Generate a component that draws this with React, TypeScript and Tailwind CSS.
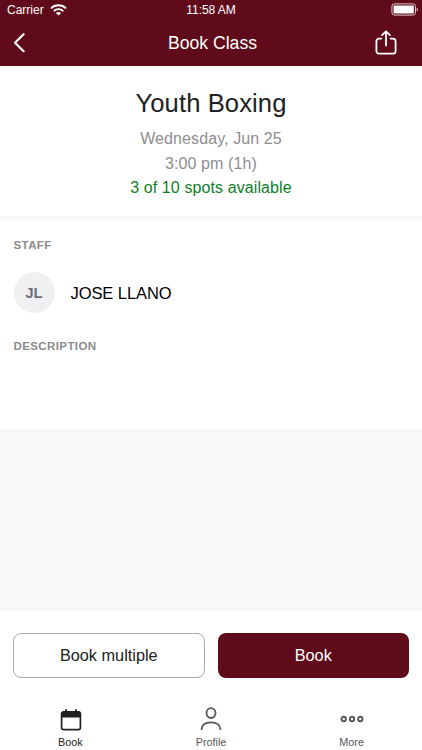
import React from 'react';

type IconProps = { className?: string };

const WifiIcon: React.FC<IconProps> = ({ className }) => (
  <svg viewBox="0 0 17 12" fill="none" stroke="currentColor" strokeWidth="1.8" className={className}>
    <path d="M1 4.3a10.8 10.8 0 0 1 15 0" />
    <path d="M3.7 7.1a7 7 0 0 1 9.6 0" />
    <path d="M8.5 11.6 5.9 9.1a3.8 3.8 0 0 1 5.2 0z" fill="currentColor" stroke="none" />
  </svg>
);

const BatteryIcon: React.FC<IconProps> = ({ className }) => (
  <svg viewBox="0 0 28 13" fill="none" className={className}>
    <rect x="0.9" y="0.9" width="23.6" height="11.2" rx="2.8" stroke="currentColor" strokeOpacity="0.8" strokeWidth="1" />
    <rect x="2.6" y="2.6" width="20.2" height="7.8" rx="1.2" fill="currentColor" />
    <path d="M25.7 4.6c1.6.5 1.6 3.3 0 3.8z" fill="currentColor" fillOpacity="0.8" />
  </svg>
);

const BackIcon: React.FC<IconProps> = ({ className }) => (
  <svg viewBox="0 0 12 20" fill="none" stroke="currentColor" strokeWidth="2.2" strokeLinecap="round" strokeLinejoin="round" className={className}>
    <path d="M10.6 1.2 2 9.7l8.6 8.5" />
  </svg>
);

const ShareIcon: React.FC<IconProps> = ({ className }) => (
  <svg viewBox="0 0 22 26" fill="none" stroke="currentColor" strokeWidth="1.8" strokeLinecap="round" strokeLinejoin="round" className={className}>
    <path d="M6.4 8.6H4a2.6 2.6 0 0 0-2.6 2.6v9.9A2.6 2.6 0 0 0 4 23.7h14a2.6 2.6 0 0 0 2.6-2.6v-9.9A2.6 2.6 0 0 0 18 8.6h-2.4" />
    <path d="M11 15.6V1.6M7 5.2l4-3.9 4 3.9" />
  </svg>
);

const CalendarIcon: React.FC<IconProps> = ({ className }) => (
  <svg viewBox="0 0 22 22" fill="none" stroke="currentColor" className={className}>
    <rect x="1.6" y="2.8" width="18.8" height="17.9" rx="2.2" strokeWidth="1.7" />
    <path d="M1.6 8V4.8a2 2 0 0 1 2-2h14.8a2 2 0 0 1 2 2V8z" fill="currentColor" strokeWidth="1" />
    <path d="M6.1 3V.9M15.9 3V.9" strokeWidth="1.8" strokeLinecap="round" />
  </svg>
);

const ProfileIcon: React.FC<IconProps> = ({ className }) => (
  <svg viewBox="0 0 22 24" fill="none" stroke="currentColor" strokeWidth="1.8" className={className}>
    <ellipse cx="11" cy="6.1" rx="4.5" ry="4.9" />
    <path d="M1.5 23c0-4.9 3.4-7.6 9.5-7.6s9.5 2.7 9.5 7.6" />
  </svg>
);

const MoreIcon: React.FC<IconProps> = ({ className }) => (
  <svg viewBox="0 0 24 8" fill="none" stroke="currentColor" strokeWidth="1.9" className={className}>
    <circle cx="3.7" cy="4" r="2.2" />
    <circle cx="12" cy="4" r="2.2" />
    <circle cx="20.3" cy="4" r="2.2" />
  </svg>
);

const Header: React.FC = () => (
  <header className="h-[66px] bg-[#5f0b1a] text-white">
    <div className="grid h-[19px] grid-cols-3 items-center pr-[3px] pl-[7px] text-[12px]">
      <div className="flex items-center gap-1.5">
        <span>Carrier</span>
        <WifiIcon className="mt-px h-3 w-[17px]" />
      </div>
      <span className="-translate-x-[2px] text-center tracking-[-0.05px]">11:58 AM</span>
      <BatteryIcon className="h-[13px] w-7 justify-self-end" />
    </div>
    <div className="grid h-[47px] grid-cols-3 items-center pr-[25px] pl-[13px]">
      <button aria-label="Back" className="w-3">
        <BackIcon className="h-5 w-3" />
      </button>
      <h1 className="translate-x-[7.5px] pt-px text-center text-[17.6px]">Book Class</h1>
      <button aria-label="Share" className="justify-self-end">
        <ShareIcon className="h-[26px] w-[22px]" />
      </button>
    </div>
  </header>
);

const tabs = [
  { label: 'Book', icon: <CalendarIcon className="mt-0.5 ml-0.5 h-[22px] w-[22px]" />, active: true },
  { label: 'Profile', icon: <ProfileIcon className="h-6 w-[22px]" />, active: false },
  { label: 'More', icon: <MoreIcon className="h-2 w-6" />, active: false },
];

const App: React.FC = () => {
  return (
    <div className="flex h-screen flex-col overflow-hidden bg-[#f7f8fa] font-['Liberation_Sans',Arial,sans-serif]">
      <Header />

      <section className="flex h-[150px] flex-col items-center bg-white pt-5 text-[16px] leading-[24.5px] tracking-[0.1px] text-[#8e8e8e]">
        <h2 className="mb-[7px] text-[25.6px] leading-[34px] text-[#212124]">Youth Boxing</h2>
        <p>Wednesday, Jun 25</p>
        <p>3:00 pm (1h)</p>
        <p className="text-[#0d8028]">3 of 10 spots available</p>
      </section>

      <section className="mt-1 h-[209px] bg-white px-[13.5px] pt-[17px]">
        <h3 className="text-[11.5px] leading-4 font-bold tracking-[0.4px] text-[#8a8a8c]">STAFF</h3>
        <div className="mt-[19px] flex items-center gap-4">
          <div className="flex h-[41px] w-[41px] items-center justify-center rounded-full bg-[#eff0f2] pt-0.5 text-[15px] font-bold text-[#70707c]">
            JL
          </div>
          <span className="pt-0.5 text-[16.5px] tracking-[-0.08px] text-black">JOSE LLANO</span>
        </div>
        <h3 className="mt-[25px] text-[11.5px] leading-4 font-bold tracking-[0.4px] text-[#8a8a8c]">DESCRIPTION</h3>
      </section>

      <footer className="mt-auto h-[139px] bg-white">
        <div className="grid grid-cols-2 gap-[13px] px-[13px] pt-[22px] text-[16.3px]">
          <button className="h-[45px] rounded-lg border border-[#a9a9ab] text-[#212124]">Book multiple</button>
          <button className="h-[45px] rounded-lg bg-[#5f0b1a] text-white">Book</button>
        </div>
        <nav className="mt-[29px] grid grid-cols-3">
          {tabs.map((tab) => (
            <div
              key={tab.label}
              className={`flex flex-col items-center text-[10.8px] leading-3 ${tab.active ? 'text-[#212124]' : 'text-[#55555c]'}`}
            >
              <div className="flex h-6 items-center">{tab.icon}</div>
              <span className="mt-[5px]">{tab.label}</span>
            </div>
          ))}
        </nav>
      </footer>
    </div>
  );
};

export default App;
